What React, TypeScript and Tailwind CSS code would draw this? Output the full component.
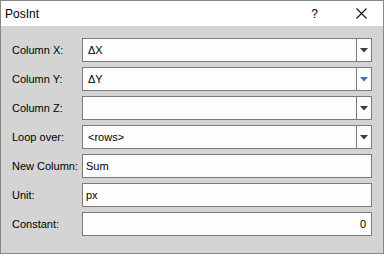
import React from 'react';

type Row =
  | { label: string; kind: 'combo'; value: string; hover?: boolean }
  | { label: string; kind: 'edit'; value: string; align?: 'right' };

const rows: Row[] = [
  { label: 'Column X:', kind: 'combo', value: 'ΔX' },
  { label: 'Column Y:', kind: 'combo', value: 'ΔY', hover: true },
  { label: 'Column Z:', kind: 'combo', value: '' },
  { label: 'Loop over:', kind: 'combo', value: '<rows>' },
  { label: 'New Column:', kind: 'edit', value: 'Sum' },
  { label: 'Unit:', kind: 'edit', value: 'px' },
  { label: 'Constant:', kind: 'edit', value: '0', align: 'right' },
];

const Arrow = ({ blue }: { blue?: boolean }) => (
  <svg width="8" height="5" viewBox="0 0 8 5">
    <path d="M0 0 H8 L4 4.5 Z" fill={blue ? '#2b73d6' : '#3c3c3c'} />
  </svg>
);

export default function App() {
  return (
    <div
      className="w-[384px] h-[254px] border border-[#878787] flex flex-col text-[11px] text-black"
      style={{ fontFamily: '"Liberation Sans", Arial, sans-serif' }}
    >
      {/* title bar */}
      <div className="h-[25px] bg-white flex items-center shrink-0">
        <span className="pl-[4px] text-[12px]">PosInt</span>
        <span className="ml-auto mr-[38px] text-[12px]">?</span>
        <svg width="11" height="11" viewBox="0 0 11 11" className="mr-[16px]">
          <path d="M0.5 0.5 L10.5 10.5 M10.5 0.5 L0.5 10.5" stroke="#111" strokeWidth="1.1" />
        </svg>
      </div>

      {/* body */}
      <div className="flex-1 bg-[#d4d4d4] px-[11px] pt-[12px]">
        <div className="grid grid-cols-[70px_290px] gap-y-[5px]">
          {rows.map((r) => (
            <React.Fragment key={r.label}>
              <div className="h-[24px] flex items-center">{r.label}</div>
              <div className="h-[24px] border border-[#7b7b7b] bg-[#fdfdfd] flex items-stretch">
                {r.kind === 'combo' ? (
                  <>
                    <div className="flex-1 flex items-center pl-[5px]">{r.value}</div>
                    <div className="w-[15px] border-l border-[#7b7b7b] flex items-center justify-center">
                      <Arrow blue={r.hover} />
                    </div>
                  </>
                ) : (
                  <div
                    className={`flex-1 flex items-center px-[3px] ${
                      r.align === 'right' ? 'justify-end pr-[5px]' : ''
                    }`}
                  >
                    {r.value}
                  </div>
                )}
              </div>
            </React.Fragment>
          ))}
        </div>
      </div>
    </div>
  );
}
